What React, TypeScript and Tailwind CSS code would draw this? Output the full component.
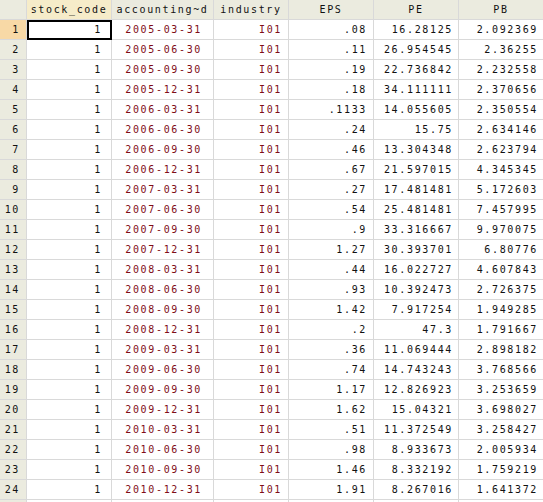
import React from "react";

const rows: [string, string, string, string][] = [
  ["2005-03-31", ".08", "16.28125", "2.092369"],
  ["2005-06-30", ".11", "26.954545", "2.36255"],
  ["2005-09-30", ".19", "22.736842", "2.232558"],
  ["2005-12-31", ".18", "34.111111", "2.370656"],
  ["2006-03-31", ".1133", "14.055605", "2.350554"],
  ["2006-06-30", ".24", "15.75", "2.634146"],
  ["2006-09-30", ".46", "13.304348", "2.623794"],
  ["2006-12-31", ".67", "21.597015", "4.345345"],
  ["2007-03-31", ".27", "17.481481", "5.172603"],
  ["2007-06-30", ".54", "25.481481", "7.457995"],
  ["2007-09-30", ".9", "33.316667", "9.970075"],
  ["2007-12-31", "1.27", "30.393701", "6.80776"],
  ["2008-03-31", ".44", "16.022727", "4.607843"],
  ["2008-06-30", ".93", "10.392473", "2.726375"],
  ["2008-09-30", "1.42", "7.917254", "1.949285"],
  ["2008-12-31", ".2", "47.3", "1.791667"],
  ["2009-03-31", ".36", "11.069444", "2.898182"],
  ["2009-06-30", ".74", "14.743243", "3.768566"],
  ["2009-09-30", "1.17", "12.826923", "3.253659"],
  ["2009-12-31", "1.62", "15.04321", "3.698027"],
  ["2010-03-31", ".51", "11.372549", "3.258427"],
  ["2010-06-30", ".98", "8.933673", "2.005934"],
  ["2010-09-30", "1.46", "8.332192", "1.759219"],
  ["2010-12-31", "1.91", "8.267016", "1.641372"],
];

const cell = "h-[20px] shrink-0 flex items-center border-r border-b border-[#d9d9d9] whitespace-nowrap";

export default function App() {
  return (
    <div
      className="w-[543px] h-[502px] overflow-hidden bg-white text-[10px] tracking-[1.65px] text-[#111]"
      style={{ fontFamily: '"DejaVu Sans Mono", monospace' }}
    >
      <div className="flex">
        <div className={`${cell} w-[27px] bg-[#ebebdf] border-[#cfcfc3]`} />
        <div className={`${cell} w-[85px] justify-center bg-[#f6ecc9] border-[#cfcfc3]`}>stock_code</div>
        <div className={`${cell} w-[102px] justify-center bg-[#ebebdf] border-[#cfcfc3]`}>accounting~d</div>
        <div className={`${cell} w-[75px] justify-center bg-[#ebebdf] border-[#cfcfc3]`}>industry</div>
        <div className={`${cell} w-[85px] justify-center bg-[#ebebdf] border-[#cfcfc3]`}>EPS</div>
        <div className={`${cell} w-[85px] justify-center bg-[#ebebdf] border-[#cfcfc3]`}>PE</div>
        <div className={`${cell} w-[85px] justify-center bg-[#ebebdf] border-[#cfcfc3]`}>PB</div>
      </div>
      {rows.map((r, i) => (
        <div key={i} className="flex">
          <div
            className={`${cell} w-[27px] justify-end pr-[6px] border-[#cfcfc3] ${
              i === 0 ? "bg-[#f8d9a6]" : "bg-[#ebebdf]"
            }`}
          >
            {i + 1}
          </div>
          <div
            className={`${cell} w-[85px] justify-end pr-[9px] ${
              i === 0 ? "outline-2 outline-black -outline-offset-2" : ""
            }`}
          >
            1
          </div>
          <div className={`${cell} w-[102px] justify-end pr-[11px] text-[#7f0d18]`}>{r[0]}</div>
          <div className={`${cell} w-[75px] justify-end pr-[6px] text-[#7f0d18]`}>I01</div>
          <div className={`${cell} w-[85px] justify-end pr-[6px]`}>{r[1]}</div>
          <div className={`${cell} w-[85px] justify-end pr-[5px]`}>{r[2]}</div>
          <div className={`${cell} w-[85px] justify-end pr-[5px]`}>{r[3]}</div>
        </div>
      ))}
      <div className="flex">
        <div className={`${cell} w-[27px] bg-[#ebebdf] border-[#cfcfc3]`} />
        <div className={`${cell} w-[85px]`} />
        <div className={`${cell} w-[102px]`} />
        <div className={`${cell} w-[75px]`} />
        <div className={`${cell} w-[85px]`} />
        <div className={`${cell} w-[85px]`} />
        <div className={`${cell} w-[85px]`} />
      </div>
    </div>
  );
}
